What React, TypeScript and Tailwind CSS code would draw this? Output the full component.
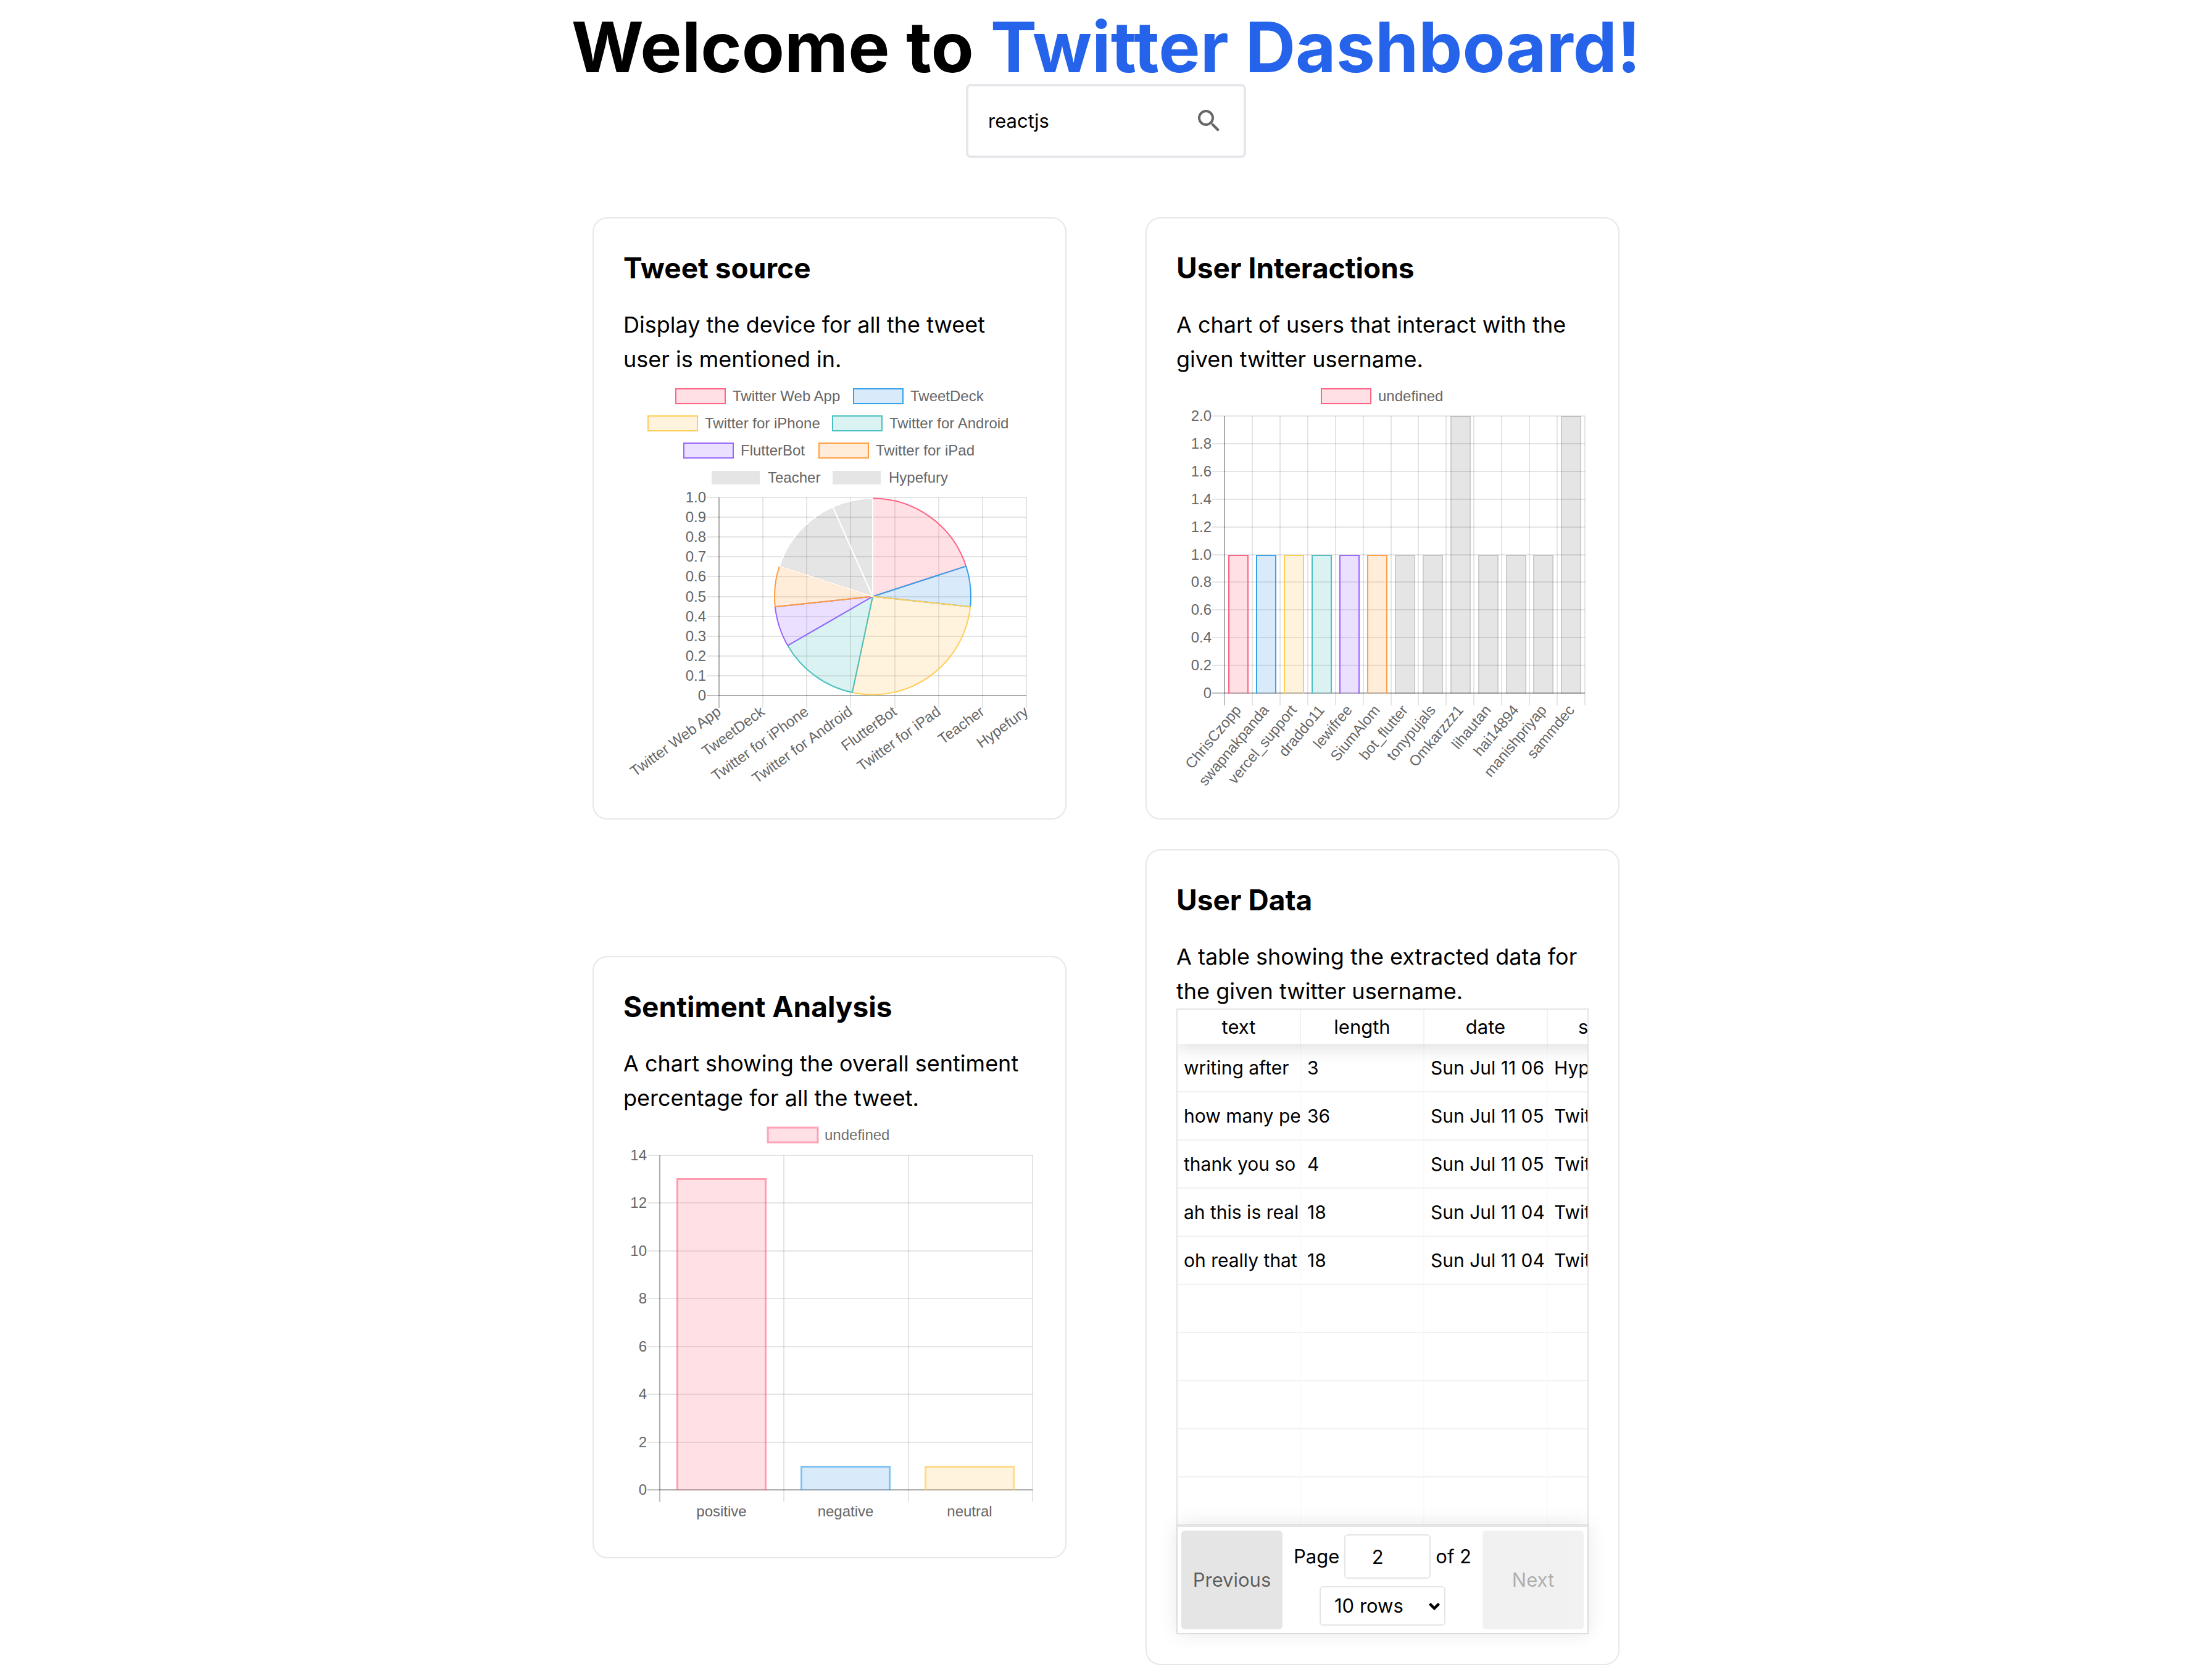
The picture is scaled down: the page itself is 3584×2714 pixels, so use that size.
import React, { useState } from "react";

type Tone = { fill: string; stroke: string };

const TONES: Tone[] = [
  { fill: "rgba(255,99,125,0.2)", stroke: "rgb(255,99,132)" },
  { fill: "rgba(66,150,230,0.2)", stroke: "rgb(54,162,235)" },
  { fill: "rgba(255,195,85,0.2)", stroke: "rgb(255,206,86)" },
  { fill: "rgba(75,192,192,0.2)", stroke: "rgb(75,192,192)" },
  { fill: "rgba(153,102,255,0.2)", stroke: "rgb(153,102,255)" },
  { fill: "rgba(255,159,64,0.2)", stroke: "rgb(255,159,64)" },
];

const GRID = "rgba(0,0,0,0.1)";
const ZERO = "rgba(0,0,0,0.25)";
const LABEL = "text-[24px] font-['Liberation_Sans',Arial,sans-serif]";

function Legend({ x, y, label, tone }: { x: number; y: number; label: string; tone: Tone }) {
  return (
    <g>
      <rect x={x} y={y} width={80} height={24} fill={tone.fill} stroke={tone.stroke} strokeWidth={2} />
      <text x={x + 92} y={y + 20} fill="#666">
        {label}
      </text>
    </g>
  );
}

type Frame = { left: number; right: number; top: number; bottom: number };

/* Grid lines with their tick marks; the first column and the last row are the zero lines. */
function Grid({ frame, xs, yLabels }: { frame: Frame; xs: number; yLabels: string[] }) {
  const { left, right, top, bottom } = frame;
  const stepX = (right - left) / xs;
  const stepY = (bottom - top) / (yLabels.length - 1);
  return (
    <g>
      {Array.from({ length: xs + 1 }, (_, i) => {
        const x = Math.round(left + i * stepX);
        return <line key={i} x1={x} x2={x} y1={top} y2={bottom + 20} stroke={i === 0 ? ZERO : GRID} strokeWidth={2} />;
      })}
      {yLabels.map((label, i) => {
        const y = Math.round(top + i * stepY);
        const zero = i === yLabels.length - 1;
        return (
          <g key={label}>
            <line x1={left - 20} x2={right} y1={y} y2={y} stroke={zero ? ZERO : GRID} strokeWidth={2} />
            <text x={left - 21} y={y + 8} textAnchor="end" fill="#666">
              {label}
            </text>
          </g>
        );
      })}
      <line x1={left} x2={left} y1={top} y2={bottom} stroke={GRID} strokeWidth={2} />
      <line x1={left} x2={right} y1={bottom} y2={bottom} stroke={GRID} strokeWidth={2} />
    </g>
  );
}

function Tilted({ x, y, angle, label }: { x: number; y: number; angle: number; label: string }) {
  return (
    <g transform={`translate(${x} ${y}) rotate(${-angle})`}>
      <text x={0} y={8} textAnchor="end" fill="#666">
        {label}
      </text>
    </g>
  );
}

const SOURCES = [
  { name: "Twitter Web App", count: 3, x: 85, y: 20 },
  { name: "TweetDeck", count: 1, x: 373, y: 20 },
  { name: "Twitter for iPhone", count: 4, x: 40, y: 64 },
  { name: "Twitter for Android", count: 2, x: 339, y: 64 },
  { name: "FlutterBot", count: 1, x: 98, y: 108 },
  { name: "Twitter for iPad", count: 1, x: 317, y: 108 },
  { name: "Teacher", count: 2, x: 142, y: 152 },
  { name: "Hypefury", count: 1, x: 338, y: 152 },
];

const PLAIN: Tone = { fill: "rgba(0,0,0,0.1)", stroke: "#fff" };

function SourceChart() {
  const frame = { left: 155, right: 653, top: 196, bottom: 517 };
  const cx = 404;
  const cy = 356.5;
  const r = 159;
  const total = SOURCES.reduce((sum, s) => sum + s.count, 0);
  let turned = 0;
  const slices = SOURCES.map((s, i) => {
    const a = (turned / total) * 2 * Math.PI - Math.PI / 2;
    turned += s.count;
    const b = (turned / total) * 2 * Math.PI - Math.PI / 2;
    const tone = TONES[i] ?? PLAIN;
    const d = `M${cx} ${cy}L${cx + r * Math.cos(a)} ${cy + r * Math.sin(a)}A${r} ${r} 0 0 1 ${cx + r * Math.cos(b)} ${cy + r * Math.sin(b)}Z`;
    return <path key={s.name} d={d} fill={tone.fill} stroke={tone.stroke} strokeWidth={2} strokeLinejoin="bevel" />;
  });
  return (
    <svg viewBox="0 0 668 668" className={`block w-full ${LABEL}`} role="img" aria-label="Tweet source chart">
      {SOURCES.map((s, i) => (
        <Legend key={s.name} x={s.x} y={s.y} label={s.name} tone={TONES[i] ?? PLAIN} />
      ))}
      <Grid
        frame={frame}
        xs={7}
        yLabels={["1.0", "0.9", "0.8", "0.7", "0.6", "0.5", "0.4", "0.3", "0.2", "0.1", "0"]}
      />
      {slices}
      {SOURCES.map((s, i) => (
        <Tilted key={s.name} x={Math.round(155 + (i * 498) / 7)} y={540} angle={36} label={s.name} />
      ))}
    </svg>
  );
}

function Bar({ x, y, w, bottom, tone, line = 2 }: { x: number; y: number; w: number; bottom: number; tone: Tone; line?: number }) {
  const h = line / 2;
  return (
    <g>
      <rect x={x} y={y} width={w} height={bottom - y} fill={tone.fill} />
      <path
        d={`M${x + h} ${bottom}V${y + h}H${x + w - h}V${bottom}`}
        fill="none"
        stroke={tone.stroke}
        strokeWidth={line}
      />
    </g>
  );
}

const USERS: [string, number][] = [
  ["ChrisCzopp", 1],
  ["swapnakpanda", 1],
  ["vercel_support", 1],
  ["draddo11", 1],
  ["lewifree", 1],
  ["SiumAlom", 1],
  ["bot_flutter", 1],
  ["tonypujals", 1],
  ["Omkarzzz1", 2],
  ["lihautan", 1],
  ["hai14894", 1],
  ["manishpriyap", 1],
  ["sammdec", 2],
];

function UserChart() {
  const frame = { left: 78, right: 662, top: 64, bottom: 513 };
  const step = (frame.right - frame.left) / USERS.length;
  return (
    <svg viewBox="0 0 668 668" className={`block w-full ${LABEL}`} role="img" aria-label="User interactions chart">
      <Legend x={235} y={20} label="undefined" tone={TONES[0]} />
      <Grid
        frame={frame}
        xs={13}
        yLabels={["2.0", "1.8", "1.6", "1.4", "1.2", "1.0", "0.8", "0.6", "0.4", "0.2", "0"]}
      />
      {USERS.map(([name, n], i) => (
        <Bar
          key={name}
          x={Math.round(frame.left + i * step + step * 0.14)}
          y={Math.round(frame.bottom - (n * (frame.bottom - frame.top)) / 2)}
          w={33}
          bottom={frame.bottom + 1}
          tone={TONES[i] ?? { fill: GRID, stroke: GRID }}
        />
      ))}
      {USERS.map(([name], i) => (
        <Tilted key={name} x={Math.round(frame.left + (i + 0.5) * step)} y={536} angle={50} label={name} />
      ))}
    </svg>
  );
}

function SentimentChart() {
  const frame = { left: 59, right: 663, top: 65, bottom: 607 };
  const soft = [
    { fill: TONES[0].fill, stroke: "rgba(255,99,132,0.55)" },
    { fill: TONES[1].fill, stroke: "rgba(54,162,235,0.55)" },
    { fill: TONES[2].fill, stroke: "rgba(255,206,86,0.65)" },
  ];
  return (
    <svg viewBox="0 0 668 668" className={`block w-full ${LABEL}`} role="img" aria-label="Sentiment analysis chart">
      <rect x={234} y={20} width={81} height={24} fill={soft[0].fill} stroke={soft[0].stroke} strokeWidth={3} />
      <text x={326} y={40} fill="#707070">
        undefined
      </text>
      <Grid frame={frame} xs={3} yLabels={["14", "12", "10", "8", "6", "4", "2", "0"]} />
      <Bar x={86} y={102} w={146} bottom={608} tone={soft[0]} line={3} />
      <Bar x={287} y={568} w={146} bottom={608} tone={soft[1]} line={3} />
      <Bar x={488} y={568} w={146} bottom={608} tone={soft[2]} line={3} />
      <g textAnchor="middle" fill="#666">
        <text x={159} y={650}>positive</text>
        <text x={360} y={650}>negative</text>
        <text x={561} y={650}>neutral</text>
      </g>
    </svg>
  );
}

function Card({ title, text, children }: { title: string; text: string; children: React.ReactNode }) {
  return (
    <section className="rounded-3xl border-2 border-[#e5e7eb] p-12">
      <h3 className="text-[46px] leading-[64px] font-bold">{title}</h3>
      <p className="mt-8 text-[36px] leading-[56px]">{text}</p>
      {children}
    </section>
  );
}

const ROWS = [
  ["writing after", "3", "Sun Jul 11 06", "Hypefury"],
  ["how many pe", "36", "Sun Jul 11 05", "Twitter"],
  ["thank you so", "4", "Sun Jul 11 05", "Twitter"],
  ["ah this is real", "18", "Sun Jul 11 04", "Twitter"],
  ["oh really that", "18", "Sun Jul 11 04", "Twitter"],
  ["", "", "", ""],
  ["", "", "", ""],
  ["", "", "", ""],
  ["", "", "", ""],
  ["", "", "", ""],
];

function DataTable() {
  const [page, setPage] = useState("2");
  return (
    <div className="border-2 border-black/10 text-[31px] leading-[48px]">
      <div className="overflow-hidden">
        <table className="w-[800px] table-fixed border-separate border-spacing-0">
          <thead className="relative z-10 shadow-[0_4px_30px_0_rgba(0,0,0,0.15)]">
            <tr>
              {["text", "length", "date", "source"].map((h) => (
                <th key={h} scope="col" className="h-14 border-r-2 border-black/5 bg-white p-0 font-normal">
                  {h}
                </th>
              ))}
            </tr>
          </thead>
          <tbody className="text-[30px]">
            {ROWS.map((row, i) => (
              <tr key={i} className="group">
                {row.map((cell, j) => (
                  <td
                    key={j}
                    className="h-[78px] overflow-hidden border-r-2 border-b-2 border-r-black/2 border-b-black/5 px-[10px] py-0 whitespace-nowrap group-last:h-[76px] group-last:border-b-0"
                  >
                    {cell}
                  </td>
                ))}
              </tr>
            ))}
          </tbody>
        </table>
      </div>
      <div className="relative z-10 flex border-t-4 border-black/10 bg-white bg-clip-padding p-[6px] shadow-[0_0_30px_0_rgba(0,0,0,0.1)]">
        <button type="button" className="h-40 w-[164px] rounded-md bg-black/10 text-black/60">
          Previous
        </button>
        <div className="flex flex-1 flex-col items-center justify-center gap-3">
          <div className="flex items-center gap-2 whitespace-nowrap">
            <label htmlFor="page">Page</label>
            <input
              id="page"
              value={page}
              onChange={(e) => setPage(e.target.value)}
              className="h-[72px] w-[140px] rounded-md border-2 border-black/10 pr-8 text-center"
            />
            <span>of 2</span>
          </div>
          <div className="relative">
            <select
              aria-label="rows per page"
              className="h-16 w-[204px] appearance-none rounded-md border-2 border-black/10 bg-white pl-[22px]"
            >
              <option>10 rows</option>
              <option>20 rows</option>
              <option>50 rows</option>
            </select>
            <svg
              viewBox="0 0 20 14"
              className="pointer-events-none absolute top-[26px] right-2 h-[14px] w-5"
              aria-hidden="true"
            >
              <path d="M2.5 2.5L10 10L17.5 2.5" fill="none" stroke="#000" strokeWidth="4.5" />
            </svg>
          </div>
        </div>
        <button type="button" disabled className="h-40 w-[164px] rounded-md bg-black/10 text-black/60 opacity-50">
          Next
        </button>
      </div>
    </div>
  );
}

export default function App() {
  const [query, setQuery] = useState("reactjs");
  return (
    <main className="flex min-h-screen flex-col items-center bg-white py-4 font-[Inter,sans-serif] text-black">
      <h1 className="text-center text-[113px] leading-[120px] font-bold">
        Welcome to <span className="text-[#2563eb]">Twitter Dashboard!</span>
      </h1>
      <form
        className="flex h-30 w-[454px] items-center rounded-lg border-4 border-[#e5e7eb] px-8"
        onSubmit={(e) => e.preventDefault()}
      >
        <input
          aria-label="Twitter username"
          value={query}
          onChange={(e) => setQuery(e.target.value)}
          className="min-w-0 flex-1 text-[31px] outline-none"
        />
        <button type="submit" aria-label="Search">
          <svg viewBox="0 0 24 24" className="block size-12" fill="#666">
            <path d="M15.5 14h-.79l-.28-.27C15.41 12.59 16 11.11 16 9.5 16 5.91 13.09 3 9.5 3S3 5.91 3 9.5 5.91 16 9.5 16c1.61 0 3.09-.59 4.23-1.57l.27.28v.79l5 4.99L20.49 19l-4.99-5zm-6 0C7.01 14 5 11.99 5 9.5S7.01 5 9.5 5 14 7.01 14 9.5 11.99 14 9.5 14z" />
          </svg>
        </button>
      </form>
      <div className="mt-24 grid w-full max-w-[1664px] grid-cols-2 items-center gap-x-32 gap-y-12">
        <Card title="Tweet source" text="Display the device for all the tweet user is mentioned in.">
          <SourceChart />
        </Card>
        <Card title="User Interactions" text="A chart of users that interact with the given twitter username.">
          <UserChart />
        </Card>
        <Card
          title="Sentiment Analysis"
          text="A chart showing the overall sentiment percentage for all the tweet."
        >
          <SentimentChart />
        </Card>
        <Card title="User Data" text="A table showing the extracted data for the given twitter username.">
          <DataTable />
        </Card>
      </div>
    </main>
  );
}
